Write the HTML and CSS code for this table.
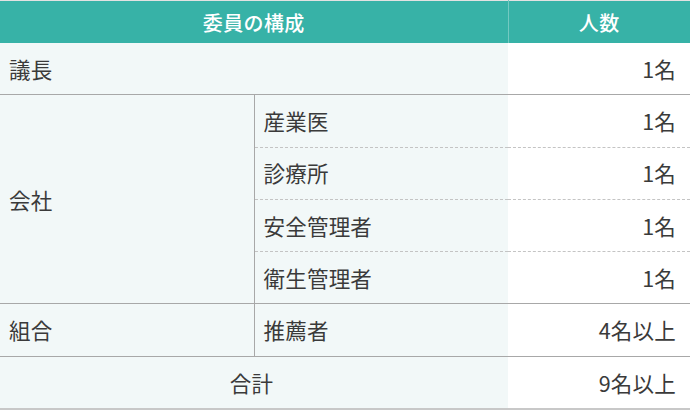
FILE: index.html
```html
<!DOCTYPE html>
<html lang="ja">
<head>
<meta charset="utf-8">
<link rel="stylesheet" href="styles.css">
</head>
<body>
<table class="members">
  <colgroup>
    <col class="c1"><col class="c2"><col class="c3">
  </colgroup>
  <thead>
    <tr>
      <th colspan="2" class="h-left">委員の構成</th>
      <th class="h-right">人数</th>
    </tr>
  </thead>
  <tbody>
    <tr class="solid">
      <td colspan="2" class="label">議長</td>
      <td class="num">1名</td>
    </tr>
    <tr class="dash">
      <td rowspan="4" class="label group">会社</td>
      <td class="label sub">産業医</td>
      <td class="num">1名</td>
    </tr>
    <tr class="dash">
      <td class="label sub">診療所</td>
      <td class="num">1名</td>
    </tr>
    <tr class="dash">
      <td class="label sub">安全管理者</td>
      <td class="num">1名</td>
    </tr>
    <tr class="solid">
      <td class="label sub">衛生管理者</td>
      <td class="num">1名</td>
    </tr>
    <tr class="solid">
      <td class="label group">組合</td>
      <td class="label sub">推薦者</td>
      <td class="num">4名以上</td>
    </tr>
    <tr class="total">
      <td colspan="2" class="label center">合計</td>
      <td class="num">9名以上</td>
    </tr>
  </tbody>
</table>
</body>
</html>
```
FILE: styles.css
```css
html, body {
  margin: 0;
  padding: 0;
  background: #ffffff;
}
.members {
  width: 690px;
  border-collapse: collapse;
  table-layout: fixed;
  font-family: "Noto Sans CJK JP", "Noto Sans", sans-serif;
  color: #3a3a3a;
  font-size: 21.5px;
  font-weight: 400;
  border-top: 1px solid #e2e2e2;
}
.c1 { width: 254px; }
.c2 { width: 254px; }
.c3 { width: 182px; }
.members th {
  background: #37b2a7;
  color: #ffffff;
  font-weight: 500;
  font-size: 20px;
  height: 42px;
  padding: 0;
  text-align: center;
  letter-spacing: 0.02em;
}
.h-left {
  border-right: 1px solid #73c9c1;
}
.members td {
  height: 51.3px;
  padding: 0 14px 0 9px;
  vertical-align: middle;
  letter-spacing: 0.01em;
  line-height: 1;
}
.label {
  background: #f2f8f8;
  text-align: left;
}
.group {
  border-right: 1px solid #a8a8a8;
}
.center {
  text-align: center;
  padding-left: 0;
}
.num {
  background: #ffffff;
  text-align: right;
}
tr.solid td { border-bottom: 1px solid #a8a8a8; }
tr.dash td.sub,
tr.dash td.num { border-bottom: 1px dashed #c4c4c4; }
tr.dash td.group { border-bottom: 1px solid #a8a8a8; }
tr.total td { border-bottom: 2px solid #c8c8c8; }
```
